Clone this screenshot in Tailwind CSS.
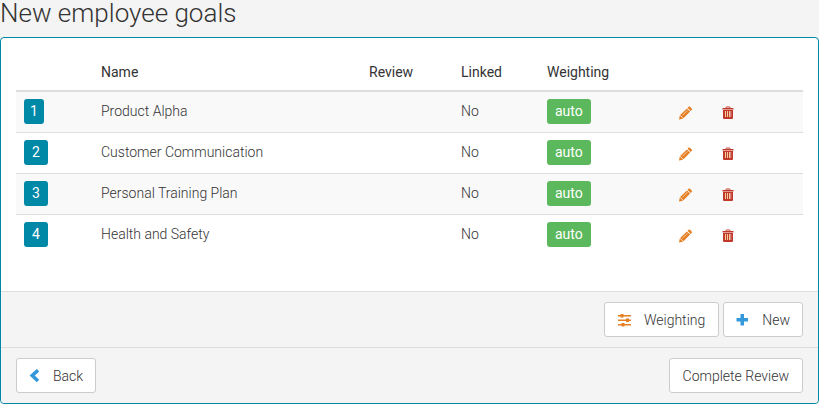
<!DOCTYPE html>
<html lang="en">
<head>
  <meta charset="UTF-8" />
  <meta name="viewport" content="width=device-width, initial-scale=1.0" />
  <title>New employee goals</title>
  <script src="https://cdn.jsdelivr.net/npm/@tailwindcss/browser@4"></script>
</head>
<body class="bg-[#f4f4f4] text-[#333] font-[Roboto,sans-serif] font-light text-sm leading-5">

  <!-- Icons shared by the rows -->
  <svg class="hidden">
    <symbol id="pencil" viewBox="0 0 14 14">
      <path fill="#e67e22" d="M8.500 1.800 9.600.8q.7-.6 1.400 0l1.700 1.700q.6.7 0 1.400l-1 1.100zM7.900 2.400l3.200 3.200-6.600 6.600-3.400-3.200zM.8 9.400l3.300 3.300L0 13.500z" />
      <path stroke="#fbe0c6" stroke-width=".8" d="m3.400 9.300 5-5" />
    </symbol>
    <symbol id="trash" viewBox="0 0 12 14">
      <path fill="none" stroke="#c0392b" d="M4 2.500V1.500q0-.5.5-.5h3q.5 0 .5.5v1" />
      <path fill="#c0392b" d="M.5 2h11v1.500H.5z" />
      <path fill="#c0392b" d="M1 4h10v8q0 1-1 1H2q-1 0-1-1z" />
      <path fill="#f5cf9b" d="M3 5h1v6H3zM5 5h1v6H5zM7 5h1v6H7z" />
      <path fill="#e8c4d0" d="M8.500 5h.7v6h-.7z" />
    </symbol>
  </svg>

  <h1 class="text-[26px] leading-[26px] pb-[11px]">New employee goals</h1>

  <main class="bg-white border border-[#0088a7] rounded-sm">
    <div class="px-[15px] pt-[15px] pb-9">
      <table class="w-full table-fixed">
        <colgroup>
          <col class="w-[77px]" />
          <col />
          <col class="w-[92px]" />
          <col class="w-[86px]" />
          <col class="w-[132px]" />
          <col class="w-[43px]" />
          <col class="w-[89px]" />
        </colgroup>
        <thead>
          <tr class="h-[38px] border-b-2 border-[#ddd] text-left">
            <td></td>
            <th class="px-2 font-normal">Name</th>
            <th class="px-2 font-normal">Review</th>
            <th class="px-2 font-normal">Linked</th>
            <th class="px-2 font-normal">Weighting</th>
            <td></td>
            <td></td>
          </tr>
        </thead>
        <tbody>
          <tr class="h-[41px] bg-[#f9f9f9] border-b border-[#ddd]">
            <td class="px-2"><span class="block w-fit rounded-[3px] bg-[#0088a7] px-[6px] py-[3px] text-sm leading-[19px] font-normal text-white">1</span></td>
            <td class="px-2 pb-[2px]">Product Alpha</td>
            <td></td>
            <td class="px-2 pb-[2px]">No</td>
            <td class="px-2"><span class="block w-fit rounded-[3px] bg-[#5cb85c] px-2 py-[3px] text-sm leading-[19px] font-normal text-white">auto</span></td>
            <td class="px-2 pt-[2px]"><button class="block" aria-label="Edit"><svg class="size-[14px]"><use href="#pencil" /></svg></button></td>
            <td class="px-2 pt-[2px]"><button class="block" aria-label="Delete"><svg class="w-3 h-[14px]"><use href="#trash" /></svg></button></td>
          </tr>
          <tr class="h-[41px] border-b border-[#ddd]">
            <td class="px-2"><span class="block w-fit rounded-[3px] bg-[#0088a7] px-2 py-[3px] text-sm leading-[19px] font-normal text-white">2</span></td>
            <td class="px-2 pb-[2px]">Customer Communication</td>
            <td></td>
            <td class="px-2 pb-[2px]">No</td>
            <td class="px-2"><span class="block w-fit rounded-[3px] bg-[#5cb85c] px-2 py-[3px] text-sm leading-[19px] font-normal text-white">auto</span></td>
            <td class="px-2 pt-[2px]"><button class="block" aria-label="Edit"><svg class="size-[14px]"><use href="#pencil" /></svg></button></td>
            <td class="px-2 pt-[2px]"><button class="block" aria-label="Delete"><svg class="w-3 h-[14px]"><use href="#trash" /></svg></button></td>
          </tr>
          <tr class="h-[41px] bg-[#f9f9f9] border-b border-[#ddd]">
            <td class="px-2"><span class="block w-fit rounded-[3px] bg-[#0088a7] px-2 py-[3px] text-sm leading-[19px] font-normal text-white">3</span></td>
            <td class="px-2 pb-[2px]">Personal Training Plan</td>
            <td></td>
            <td class="px-2 pb-[2px]">No</td>
            <td class="px-2"><span class="block w-fit rounded-[3px] bg-[#5cb85c] px-2 py-[3px] text-sm leading-[19px] font-normal text-white">auto</span></td>
            <td class="px-2 pt-[2px]"><button class="block" aria-label="Edit"><svg class="size-[14px]"><use href="#pencil" /></svg></button></td>
            <td class="px-2 pt-[2px]"><button class="block" aria-label="Delete"><svg class="w-3 h-[14px]"><use href="#trash" /></svg></button></td>
          </tr>
          <tr class="h-[41px]">
            <td class="px-2"><span class="block w-fit rounded-[3px] bg-[#0088a7] px-2 py-[3px] text-sm leading-[19px] font-normal text-white">4</span></td>
            <td class="px-2 pb-[2px]">Health and Safety</td>
            <td></td>
            <td class="px-2 pb-[2px]">No</td>
            <td class="px-2"><span class="block w-fit rounded-[3px] bg-[#5cb85c] px-2 py-[3px] text-sm leading-[19px] font-normal text-white">auto</span></td>
            <td class="px-2 pt-[2px]"><button class="block" aria-label="Edit"><svg class="size-[14px]"><use href="#pencil" /></svg></button></td>
            <td class="px-2 pt-[2px]"><button class="block" aria-label="Delete"><svg class="w-3 h-[14px]"><use href="#trash" /></svg></button></td>
          </tr>
        </tbody>
      </table>
    </div>

    <!-- Goal actions -->
    <div class="flex justify-end gap-1 border-t border-[#ddd] bg-[#f4f4f4] px-[15px] py-[10px]">
      <button class="flex h-[35px] items-center gap-3 rounded-[3px] border border-[#ccc] bg-white px-[13px]">
        <svg class="size-[14px]" viewBox="0 0 14 14" fill="#e67e22">
          <path d="M0 2h13v1.500H0zM0 6.500h13v1.500H0zM0 11h13v1.500H0z" />
          <path d="M2.500 1h3v3.500h-3zM8 5.500h3V9H8zM3.500 10h3v3.500h-3z" />
        </svg>
        Weighting
      </button>
      <button class="flex h-[35px] items-center gap-3 rounded-[3px] border border-[#ccc] bg-white px-3">
        <svg class="size-[14px]" viewBox="0 0 14 14" fill="#3498db">
          <path d="M4.500 1h3.500v4H12v3.500H8V12.500H4.500V8.500H.5V5h4z" />
        </svg>
        New
      </button>
    </div>

    <!-- Review navigation -->
    <div class="flex justify-between rounded-b-sm border-t border-[#ddd] bg-[#f4f4f4] px-[15px] py-[10px]">
      <button class="flex h-[35px] items-center gap-3 rounded-[3px] border border-[#ccc] bg-white px-3">
        <svg class="w-3 h-[14px]" viewBox="0 0 12 14" fill="none" stroke="#3498db" stroke-width="3.500">
          <path d="M9 1.200 3.200 6.600 9 12" />
        </svg>
        Back
      </button>
      <button class="flex h-[35px] items-center rounded-[3px] border border-[#ccc] bg-white px-[13px]">Complete Review</button>
    </div>
  </main>

</body>
</html>
